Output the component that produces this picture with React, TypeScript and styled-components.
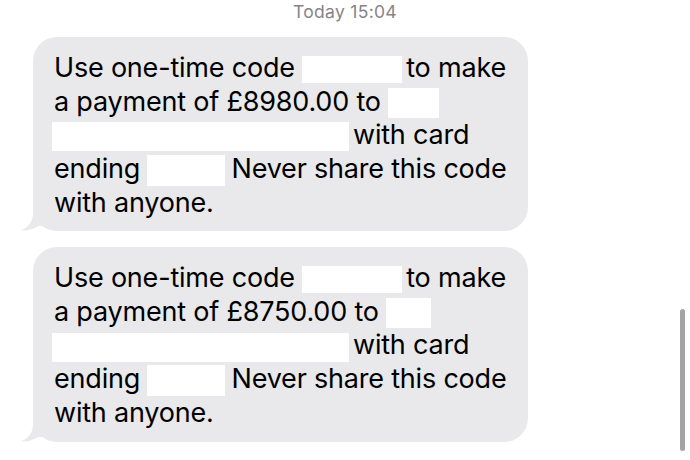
import React from "react";
import styled, { createGlobalStyle } from "styled-components";

const GlobalStyle = createGlobalStyle`
  html, body {
    margin: 0;
    padding: 0;
    background: #ffffff;
  }
  body {
    font-family: "Inter", "Liberation Sans", Arial, sans-serif;
    -webkit-font-smoothing: antialiased;
  }
`;

const Screen = styled.div`
  position: relative;
  width: 690px;
  height: 460px;
  overflow: hidden;
  background: #ffffff;
  display: flex;
  flex-direction: column;
`;

const Stamp = styled.div`
  text-align: center;
  color: #858589;
  font-size: 17.5px;
  letter-spacing: 0.3px;
  line-height: 22px;
  padding-top: 1px;
  margin-bottom: 14px;
`;

const Thread = styled.div`
  display: flex;
  flex-direction: column;
  gap: 16px;
  padding-left: 33px;
`;

const Bubble = styled.div`
  position: relative;
  width: 495px;
  box-sizing: border-box;
  padding: 14px 10px 12px 21px;
  background: #e9e9eb;
  border-radius: 24px;
  color: #000000;
  font-size: 27px;
  line-height: 33.5px;
  letter-spacing: -0.2px;
`;

const Tail = styled.svg`
  position: absolute;
  left: -12px;
  bottom: 0;
  width: 24px;
  height: 22px;
`;

const Line = styled.div`
  white-space: nowrap;
`;

const Redacted = styled.span<{ $w: number; $h: number; $ml?: number; $mr?: number }>`
  display: inline-block;
  width: ${(p) => p.$w}px;
  height: ${(p) => p.$h}px;
  margin-left: ${(p) => p.$ml ?? 0}px;
  margin-right: ${(p) => p.$mr ?? 0}px;
  background: #ffffff;
  vertical-align: middle;
`;

const Scrollbar = styled.div`
  position: absolute;
  right: 5px;
  top: 309px;
  width: 5px;
  height: 142px;
  border-radius: 3px;
  background: #a3a3a3;
`;

const Message = ({ amount, gap }: { amount: string; gap: number }) => (
  <Bubble>
    <Tail viewBox="0 0 24 22">
      <path d="M12 0 L12 4 C12 12 8 18 0 21.5 C7 22 13 20 17 17 L24 17 L24 0 Z" fill="#e9e9eb" />
    </Tail>
    <Line>
      Use one-time code <Redacted $w={100} $h={27} $mr={4} />to make
    </Line>
    <Line>
      a payment of £{amount} to <Redacted $w={gap} $h={30} />
    </Line>
    <Line>
      <Redacted $w={297} $h={29} $ml={-2} $mr={4} />with card
    </Line>
    <Line>
      ending <Redacted $w={78} $h={31} $mr={6} />Never share this code
    </Line>
    <Line>with anyone.</Line>
  </Bubble>
);

export default function App() {
  return (
    <Screen>
      <GlobalStyle />
      <Stamp>Today 15:04</Stamp>
      <Thread>
        <Message amount="8980.00" gap={51} />
        <Message amount="8750.00" gap={45} />
      </Thread>
      <Scrollbar />
    </Screen>
  );
}
